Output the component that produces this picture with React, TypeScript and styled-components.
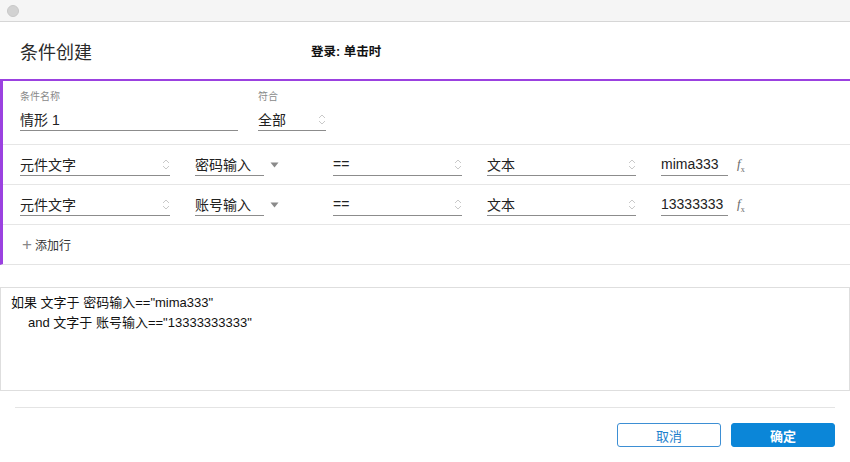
import React from "react";
import styled, { createGlobalStyle } from "styled-components";

const GlobalStyle = createGlobalStyle`
  html, body {
    margin: 0;
    padding: 0;
    background: #ffffff;
  }
  body {
    font-family: "Liberation Sans", "Noto Sans CJK SC", sans-serif;
    color: #222;
  }
`;

const Window = styled.div`
  width: 850px;
  height: 462px;
  overflow: hidden;
  background: #fff;
  display: flex;
  flex-direction: column;
`;

const TitleBar = styled.div`
  height: 21px;
  background: #f5f5f5;
  border-bottom: 1px solid #d6d6d6;
  display: flex;
  align-items: center;
  padding-left: 7px;
  flex-shrink: 0;
`;

const Dot = styled.span`
  width: 12px;
  height: 12px;
  border-radius: 50%;
  background: #d2d2d2;
  border: 1px solid #c8c8c8;
  box-sizing: border-box;
`;

const Header = styled.div`
  height: 57px;
  display: flex;
  align-items: center;
  padding-left: 20px;
  flex-shrink: 0;
`;

const Title = styled.h1`
  margin: 0;
  width: 291px;
  font-size: 18px;
  font-weight: 400;
  color: #2a2a2a;
`;

const EventText = styled.span`
  font-size: 12.5px;
  font-weight: 700;
  color: #111;
`;

const ConditionPanel = styled.div`
  border-top: 2px solid #9b41e0;
  border-left: 3px solid #9b41e0;
  border-bottom: 1px solid #e4e4e4;
  flex-shrink: 0;
`;

const NameSection = styled.div`
  height: 64px;
  display: flex;
  gap: 20px;
  padding-left: 17px;
  padding-top: 9px;
  box-sizing: border-box;
  border-bottom: 1px solid #e6e6e6;
`;

const NameGroup = styled.div`
  display: flex;
  flex-direction: column;
`;

const Label = styled.span`
  font-size: 10px;
  color: #8a8a8a;
  height: 14px;
  line-height: 14px;
  margin-bottom: 5px;
`;

const Field = styled.div<{ $w: number }>`
  width: ${(p) => p.$w}px;
  height: 22px;
  display: flex;
  align-items: center;
  justify-content: space-between;
  border-bottom: 1px solid #8c8c8c;
  font-size: 14px;
  color: #222;
  box-sizing: border-box;
  padding-bottom: 1px;
  flex-shrink: 0;
`;

const ConditionRow = styled.div`
  height: 40px;
  display: flex;
  align-items: center;
  padding-left: 17px;
  padding-top: 1px;
  box-sizing: border-box;
  border-bottom: 1px solid #e6e6e6;
`;

const Cell = styled.div<{ $w: number }>`
  width: ${(p) => p.$w}px;
  display: flex;
  align-items: center;
  flex-shrink: 0;
`;

const Caret = styled.span`
  display: flex;
  margin-left: 6px;
`;

const Fx = styled.span`
  font-family: "Liberation Serif", serif;
  font-style: italic;
  font-size: 13px;
  color: #6a6a6a;
  margin-left: 9px;
  sub {
    font-size: 8px;
    font-style: normal;
  }
`;

const AddRow = styled.div`
  height: 39px;
  display: flex;
  align-items: center;
  padding-left: 19px;
  font-size: 12px;
  color: #333;
  gap: 3px;
`;

const Plus = styled.span`
  font-size: 17px;
  font-weight: 300;
  color: #888;
  line-height: 1;
`;

const Summary = styled.div`
  margin-top: 22px;
  height: 104px;
  border: 1px solid #dedede;
  box-sizing: border-box;
  padding: 5px 10px;
  font-size: 13px;
  line-height: 20px;
  color: #111;
  flex-shrink: 0;
`;

const Indent = styled.div`
  padding-left: 17px;
`;

const Divider = styled.div`
  margin: 16px 15px 0;
  height: 1px;
  background: #e4e4e4;
  flex-shrink: 0;
`;

const Footer = styled.div`
  display: flex;
  justify-content: flex-end;
  gap: 10px;
  padding: 15px 15px 0;
`;

const Button = styled.button<{ $primary?: boolean }>`
  width: 104px;
  height: 24px;
  border-radius: 3px;
  font-family: "Liberation Sans", "Noto Sans CJK SC", sans-serif;
  font-size: 13px;
  cursor: pointer;
  border: 1px solid ${(p) => (p.$primary ? "#0b86d8" : "#3d8fd4")};
  background: ${(p) => (p.$primary ? "#0b86d8" : "#fff")};
  color: ${(p) => (p.$primary ? "#fff" : "#1f7fcc")};
  font-weight: ${(p) => (p.$primary ? 700 : 400)};
`;

const UpDown = () => (
  <svg width="8" height="13" viewBox="0 0 8 13">
    <path d="M1 5 L4 2 L7 5" fill="none" stroke="#c9c9c9" strokeWidth="1" />
    <path d="M1 8 L4 11 L7 8" fill="none" stroke="#c9c9c9" strokeWidth="1" />
  </svg>
);

const DownTriangle = () => (
  <svg width="9" height="6" viewBox="0 0 9 6">
    <path d="M0.5 0.5 L8.5 0.5 L4.5 5.5 Z" fill="#8a8a8a" />
  </svg>
);

interface Condition {
  widget: string;
  value: string;
}

const conditions: Condition[] = [
  { widget: "密码输入", value: "mima333" },
  { widget: "账号输入", value: "13333333" },
];

export default function App() {
  return (
    <>
      <GlobalStyle />
      <Window>
        <TitleBar>
          <Dot />
        </TitleBar>
        <Header>
          <Title>条件创建</Title>
          <EventText>登录: 单击时</EventText>
        </Header>
        <ConditionPanel>
          <NameSection>
            <NameGroup>
              <Label>条件名称</Label>
              <Field $w={218}>情形 1</Field>
            </NameGroup>
            <NameGroup>
              <Label>符合</Label>
              <Field $w={68}>
                全部
                <UpDown />
              </Field>
            </NameGroup>
          </NameSection>
          {conditions.map((c) => (
            <ConditionRow key={c.widget}>
              <Cell $w={175}>
                <Field $w={150}>
                  元件文字
                  <UpDown />
                </Field>
              </Cell>
              <Cell $w={138}>
                <Field $w={69}>{c.widget}</Field>
                <Caret>
                  <DownTriangle />
                </Caret>
              </Cell>
              <Cell $w={154}>
                <Field $w={129}>
                  ==
                  <UpDown />
                </Field>
              </Cell>
              <Cell $w={174}>
                <Field $w={149}>
                  文本
                  <UpDown />
                </Field>
              </Cell>
              <Cell $w={100}>
                <Field $w={67}>{c.value}</Field>
                <Fx>
                  f<sub>x</sub>
                </Fx>
              </Cell>
            </ConditionRow>
          ))}
          <AddRow>
            <Plus>+</Plus>添加行
          </AddRow>
        </ConditionPanel>
        <Summary>
          <div>如果 文字于 密码输入=="mima333"</div>
          <Indent>and 文字于 账号输入=="13333333333"</Indent>
        </Summary>
        <Divider />
        <Footer>
          <Button>取消</Button>
          <Button $primary>确定</Button>
        </Footer>
      </Window>
    </>
  );
}
